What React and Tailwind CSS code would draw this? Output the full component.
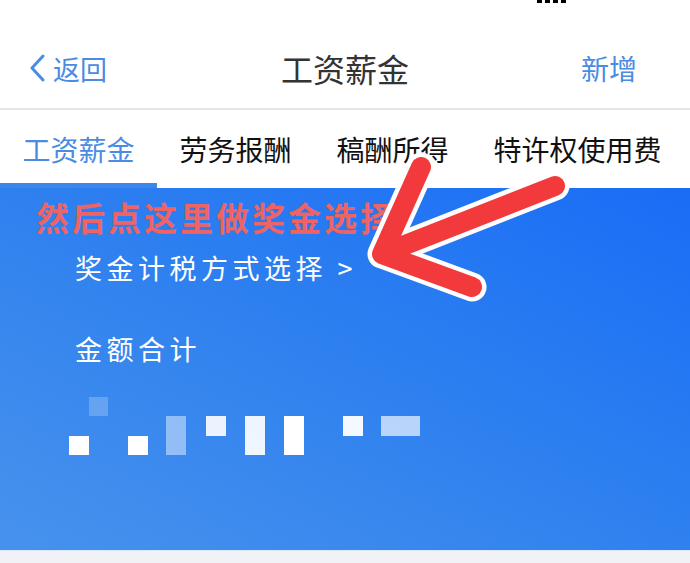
import React from "react";

const tabs = ["工资薪金", "劳务报酬", "稿酬所得", "特许权使用费"];

// pixelated amount blocks: [x, y, w, h, opacity]
const blocks = [
  [20, 0, 19, 19, 0.22],
  [0, 39, 20, 19, 1],
  [59, 39, 20, 19, 1],
  [97, 19, 20, 39, 0.45],
  [137, 19, 20, 20, 0.9],
  [176, 19, 20, 39, 0.92],
  [215, 19, 20, 39, 1],
  [274, 19, 20, 20, 0.95],
  [312, 19, 39, 20, 0.66],
];

const App = () => {
  return (
    <div className="relative w-[690px] h-[563px] overflow-hidden bg-white font-['Noto_Sans_CJK_SC',sans-serif]">
      {/* status bar remnant */}
      <div className="h-[28px] flex items-start pl-[537px] gap-[3px]">
        <span className="w-[5px] h-[3px] bg-black" />
        <span className="w-[5px] h-[3px] bg-black" />
        <span className="w-[5px] h-[3px] bg-black" />
        <span className="w-[5px] h-[3px] bg-black" />
      </div>

      {/* Nav bar */}
      <div className="h-[80px] grid grid-cols-[1fr_auto_1fr] items-center px-[28px]">
        <div className="flex items-center gap-[7px] text-[#4a8be3]">
          <svg width="18" height="28" viewBox="0 0 18 28" fill="none">
            <path d="M15 2 L4 14 L15 26" stroke="#4a8be3" strokeWidth="3" strokeLinecap="round" strokeLinejoin="round" />
          </svg>
          <span className="text-[27px] leading-none">返回</span>
        </div>
        <div className="text-[32px] leading-none text-[#333333]">工资薪金</div>
        <div className="justify-self-end mr-[25px] text-[28px] leading-none text-[#4a8be3]">新增</div>
      </div>
      <div className="h-[2px] bg-[#e6e6e6]" />

      {/* Tabs */}
      <div className="h-[78px] flex">
        {tabs.map((t, i) => (
          <div
            key={t}
            className={
              i === 0
                ? "relative h-full flex items-center px-[22.5px] text-[28px] leading-none text-[#4a8be3]"
                : "relative h-full flex items-center px-[22.5px] text-[28px] leading-none text-[#111111]"
            }
          >
            {t}
            {i === 0 && <div className="absolute left-0 right-0 bottom-0 h-[5px] bg-[#3c87ec]" />}
          </div>
        ))}
      </div>

      {/* Blue card */}
      <div className="h-[362px] bg-linear-to-tr from-[#4792ed] via-[#2f81ef] to-[#1a6cf6] flex flex-col">
        <div className="pl-[75px] pt-[62px] text-white text-[27px] tracking-[4.5px] leading-[36px]">
          <div>奖金计税方式选择 &gt;</div>
          <div className="mt-[45px]">金额合计</div>
        </div>
        <svg className="ml-[69px] mt-[30px]" width="352" height="59" viewBox="0 0 352 59">
          {blocks.map(([x, y, w, h, o], i) => (
            <rect key={i} x={x} y={y} width={w} height={h} fill="#ffffff" fillOpacity={o} />
          ))}
        </svg>
      </div>
      <div className="h-[13px] bg-[#f0f2f5] border-t border-[#dce8fa]" />

      {/* annotation text */}
      <div className="absolute left-[36px] top-[195px] text-[33px] font-bold tracking-[3px] leading-[44px] text-[#ee6464]">
        然后点这里做奖金选择
      </div>

      {/* annotation arrow */}
      <svg className="absolute inset-0 pointer-events-none" width="690" height="563" viewBox="0 0 690 563">
        <path
          d="M555 186 L382 254 M421 167 L382 254 L472 287"
          stroke="#ffffff"
          strokeWidth="29"
          strokeLinecap="round"
          strokeLinejoin="round"
          fill="none"
        />
        <path
          d="M555 186 L382 254 M421 167 L382 254 L472 287"
          stroke="#f23a3c"
          strokeWidth="20"
          strokeLinecap="round"
          strokeLinejoin="round"
          fill="none"
        />
      </svg>
    </div>
  );
};

export default App;
